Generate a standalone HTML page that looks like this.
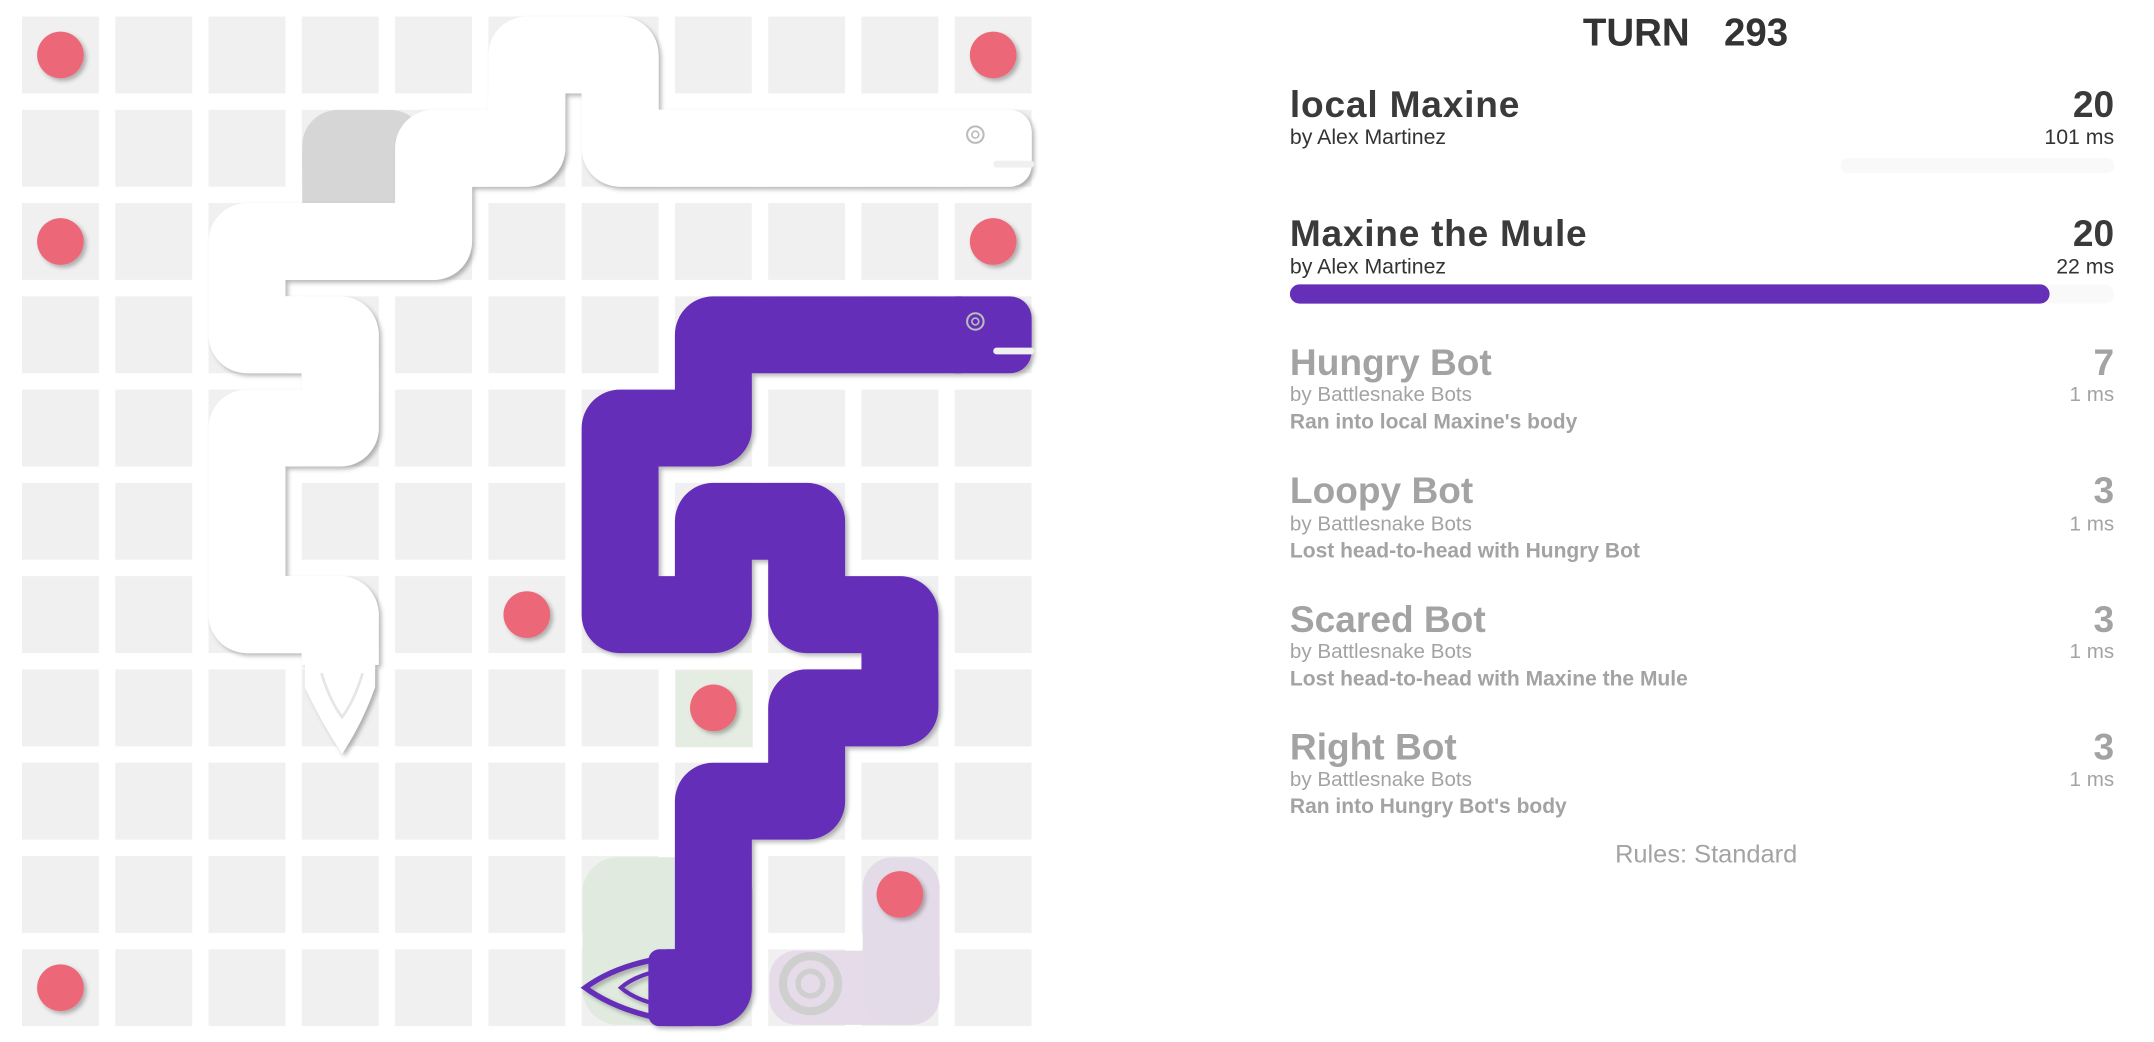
<!DOCTYPE html>
<html><head><meta charset="utf-8"><style>
html,body{margin:0;padding:0;background:#fff;overflow:hidden}
svg{display:block}
text{font-family:"Liberation Sans",sans-serif}
</style></head><body>
<svg width="2154" height="1042" viewBox="0 0 1568 758.5" xmlns="http://www.w3.org/2000/svg">
<defs>
<pattern id="g" patternUnits="userSpaceOnUse" x="16" y="12" width="67.9" height="67.9">
<rect x="0" y="0" width="56" height="56" fill="#f0f0f0"/>
</pattern>
<filter id="sh" x="-10%" y="-10%" width="120%" height="120%"><feDropShadow dx="2" dy="2" stdDeviation="1.6" flood-color="#000" flood-opacity="0.28"/></filter>
</defs>
<rect x="16" y="12" width="735" height="735" fill="url(#g)"/>
<!-- ghost tints -->
<rect x="220" y="80" width="90" height="68" rx="26" fill="#d6d6d6"/>
<rect x="220" y="110" width="90" height="38" fill="#d6d6d6"/>
<rect x="492" y="488" width="56" height="56" fill="#e2ecdf" opacity="0.8"/>
<rect x="424" y="624" width="124" height="122" rx="26" fill="#e0eadf"/>
<rect x="560" y="692" width="124" height="54" rx="20" fill="#e6dce9"/>
<rect x="628" y="624" width="56" height="122" rx="22" fill="#e4dbe8"/>
<circle cx="590" cy="716" r="20" fill="none" stroke="#cfcfcf" stroke-width="6"/>
<circle cx="590" cy="716" r="9" fill="none" stroke="#cfcfcf" stroke-width="4"/>
<!-- food -->
<g fill="#ec6879" filter="url(#sh)">
<circle cx="44" cy="40" r="17"/><circle cx="723" cy="40" r="17"/>
<circle cx="44" cy="175.8" r="17"/><circle cx="723" cy="175.8" r="17"/>
<circle cx="383.5" cy="447.4" r="17"/><circle cx="519.3" cy="515.3" r="17"/>
<circle cx="655.1" cy="651.1" r="17"/><circle cx="44" cy="719" r="17"/>
</g>
<!-- white snake -->
<g filter="url(#sh)">
<polyline fill="none" stroke="#fff" stroke-width="56" stroke-linejoin="round" points="247.7,484 247.7,447.4 179.8,447.4 179.8,311.6 247.7,311.6 247.7,243.7 179.8,243.7 179.8,175.8 315.6,175.8 315.6,107.9 383.5,107.9 383.5,40 451.4,40 451.4,107.9 700,107.9"/>
<rect x="680" y="79.9" width="71" height="56" rx="16" fill="#fff"/>
<path d="M224,484 L271,484 L271,500 Q262,525 249,545 Q236,525 224,500 Z" fill="#fff" stroke="#fff" stroke-width="4"/>
</g>
<path d="M234,490 Q240,510 249,522 Q258,510 264,490" fill="none" stroke="#e6e6e6" stroke-width="2"/>
<rect x="723" y="117" width="30" height="5" rx="2.5" fill="#f0f0f0"/>
<circle cx="710" cy="98" r="6" fill="none" stroke="#bbb" stroke-width="1.5"/><circle cx="710" cy="98" r="2.5" fill="none" stroke="#bbb" stroke-width="1.2"/>
<!-- purple snake -->
<g filter="url(#sh)">
<polyline fill="none" stroke="#652fb8" stroke-width="56" stroke-linejoin="round" points="485,719 519.3,719 519.3,583.2 587.2,583.2 587.2,515.3 655.1,515.3 655.1,447.4 587.2,447.4 587.2,379.5 519.3,379.5 519.3,447.4 451.4,447.4 451.4,311.6 519.3,311.6 519.3,243.7 700,243.7"/>
<rect x="680" y="215.7" width="71" height="56" rx="16" fill="#652fb8"/>
<rect x="472" y="691" width="40" height="56" rx="8" fill="#652fb8"/>
<path d="M474,699 Q445,705 426,719 Q445,733 474,740" fill="none" stroke="#652fb8" stroke-width="4"/>
<path d="M474,708 Q460,712 452,719 Q460,726 474,730" fill="none" stroke="#652fb8" stroke-width="3"/>
</g>
<rect x="723" y="253" width="30" height="5" rx="2.5" fill="#f0f0f0"/>
<circle cx="710" cy="234" r="6" fill="none" stroke="#bbb" stroke-width="1.5"/><circle cx="710" cy="234" r="2.5" fill="none" stroke="#bbb" stroke-width="1.2"/>
<!-- panel -->
<text x="1230" y="33" text-anchor="end" font-size="28" font-weight="bold" fill="#333">TURN</text>
<text x="1255" y="33" font-size="28" font-weight="bold" fill="#333">293</text>
<g font-weight="bold" font-size="27" fill="#3a3a3a">
<text x="939" y="85" textLength="167">local Maxine</text><text x="1539" y="85" text-anchor="end">20</text>
<text x="939" y="179" textLength="216">Maxine the Mule</text><text x="1539" y="179" text-anchor="end">20</text>
</g>
<g font-size="15.5" fill="#333">
<text x="939" y="105">by Alex Martinez</text><text x="1539" y="105" text-anchor="end">101 ms</text>
<text x="939" y="199">by Alex Martinez</text><text x="1539" y="199" text-anchor="end">22 ms</text>
</g>
<rect x="1340" y="115" width="199" height="11" rx="5" fill="#f9f9f9"/>
<rect x="939" y="207" width="600" height="14" rx="7" fill="#f9f9f9"/>
<rect x="939" y="207" width="553" height="14" rx="7" fill="#652fb8"/>
<g font-weight="bold" font-size="27" fill="#a3a3a3">
<text x="939" y="273">Hungry Bot</text><text x="1539" y="273" text-anchor="end">7</text>
<text x="939" y="366">Loopy Bot</text><text x="1539" y="366" text-anchor="end">3</text>
<text x="939" y="460">Scared Bot</text><text x="1539" y="460" text-anchor="end">3</text>
<text x="939" y="553">Right Bot</text><text x="1539" y="553" text-anchor="end">3</text>
</g>
<g font-size="15" fill="#a3a3a3">
<text x="939" y="292">by Battlesnake Bots</text><text x="1539" y="292" text-anchor="end">1 ms</text>
<text x="939" y="386">by Battlesnake Bots</text><text x="1539" y="386" text-anchor="end">1 ms</text>
<text x="939" y="479">by Battlesnake Bots</text><text x="1539" y="479" text-anchor="end">1 ms</text>
<text x="939" y="572">by Battlesnake Bots</text><text x="1539" y="572" text-anchor="end">1 ms</text>
</g>
<g font-size="15.3" font-weight="bold" fill="#a3a3a3">
<text x="939" y="312">Ran into local Maxine's body</text>
<text x="939" y="406">Lost head-to-head with Hungry Bot</text>
<text x="939" y="499">Lost head-to-head with Maxine the Mule</text>
<text x="939" y="592">Ran into Hungry Bot's body</text>
</g>
<text x="1242" y="628" text-anchor="middle" font-size="18.5" fill="#a3a3a3">Rules: Standard</text>
</svg>
</body></html>
